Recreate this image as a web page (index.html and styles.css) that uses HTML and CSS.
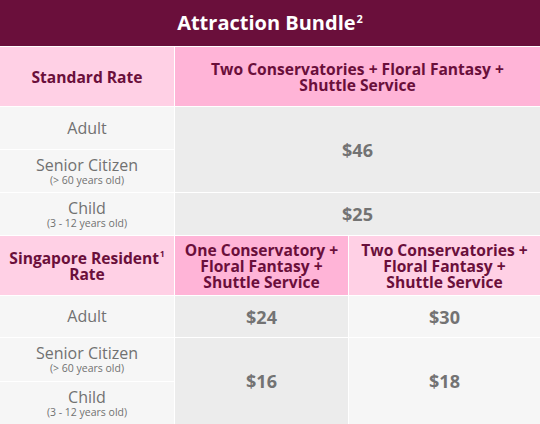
FILE: index.html
```html
<!DOCTYPE html>
<html>
<head>
<meta charset="utf-8">
<link rel="stylesheet" href="styles.css">
</head>
<body>
<div class="table">
  <div class="cell title">Attraction Bundle<sup class="sup">2</sup></div>

  <div class="cell head light"><div>Standard Rate</div></div>
  <div class="cell head dark span2"><div>Two Conservatories + Floral Fantasy +<br>Shuttle Service</div></div>

  <div class="cell label">Adult</div>
  <div class="cell price span2 rows2">$46</div>
  <div class="cell label"><span>Senior Citizen</span><small>(&gt; 60 years old)</small></div>
  <div class="cell label"><span>Child</span><small>(3 - 12 years old)</small></div>
  <div class="cell price span2">$25</div>

  <div class="cell head light"><div>Singapore Resident<sup class="sup1">1</sup><br>Rate</div></div>
  <div class="cell head dark"><div>One Conservatory +<br>Floral Fantasy +<br>Shuttle Service</div></div>
  <div class="cell head light"><div>Two Conservatories +<br>Floral Fantasy +<br>Shuttle Service</div></div>

  <div class="cell label">Adult</div>
  <div class="cell price">$24</div>
  <div class="cell price alt">$30</div>
  <div class="cell label"><span>Senior Citizen</span><small>(&gt; 60 years old)</small></div>
  <div class="cell price rows2">$16</div>
  <div class="cell price alt rows2">$18</div>
  <div class="cell label"><span>Child</span><small>(3 - 12 years old)</small></div>
</div>
</body>
</html>
```
FILE: styles.css
```css
html, body {
  margin: 0;
  padding: 0;
  background: #ffffff;
}
body {
  width: 540px;
  height: 424px;
  overflow: hidden;
  font-family: "Open Sans", "Noto Sans", sans-serif;
}
.table {
  display: grid;
  grid-template-columns: 174px 173px 1fr;
  grid-template-rows: 46px 59px 42px 42px 42px 59px 41px 43px 42px;
  gap: 1px;
  background: #ffffff;
  width: 540px;
}
.cell {
  display: flex;
  flex-direction: column;
  align-items: center;
  justify-content: center;
  text-align: center;
}
.title {
  grid-column: 1 / 4;
  background: #6a0f3b;
  color: #ffffff;
  font-weight: 700;
  font-size: 20px;
  display: block;
  line-height: 46px;
}
.sup {
  font-size: 11px;
  vertical-align: 0;
  position: relative;
  top: -7px;
  margin-left: 1px;
}
.sup1 {
  font-size: 8px;
  line-height: 0;
  vertical-align: 0;
  position: relative;
  top: -7px;
  margin-left: 1px;
}
.head {
  color: #6a0f3b;
  font-weight: 700;
  font-size: 15.6px;
  line-height: 16px;
}
.light {
  background: #ffd0e5;
}
.dark {
  background: #ffb4d7;
}
.span2 {
  grid-column: span 2;
}
.rows2 {
  grid-row: span 2;
}
.label {
  background: #f6f6f6;
  color: #717171;
  font-size: 16px;
  line-height: 17px;
}
.label small {
  font-size: 10.5px;
  line-height: 12px;
}
.price {
  background: #ececec;
  color: #737373;
  font-weight: 700;
  font-size: 18px;
}
.price.alt {
  background: #f6f6f6;
}
```
